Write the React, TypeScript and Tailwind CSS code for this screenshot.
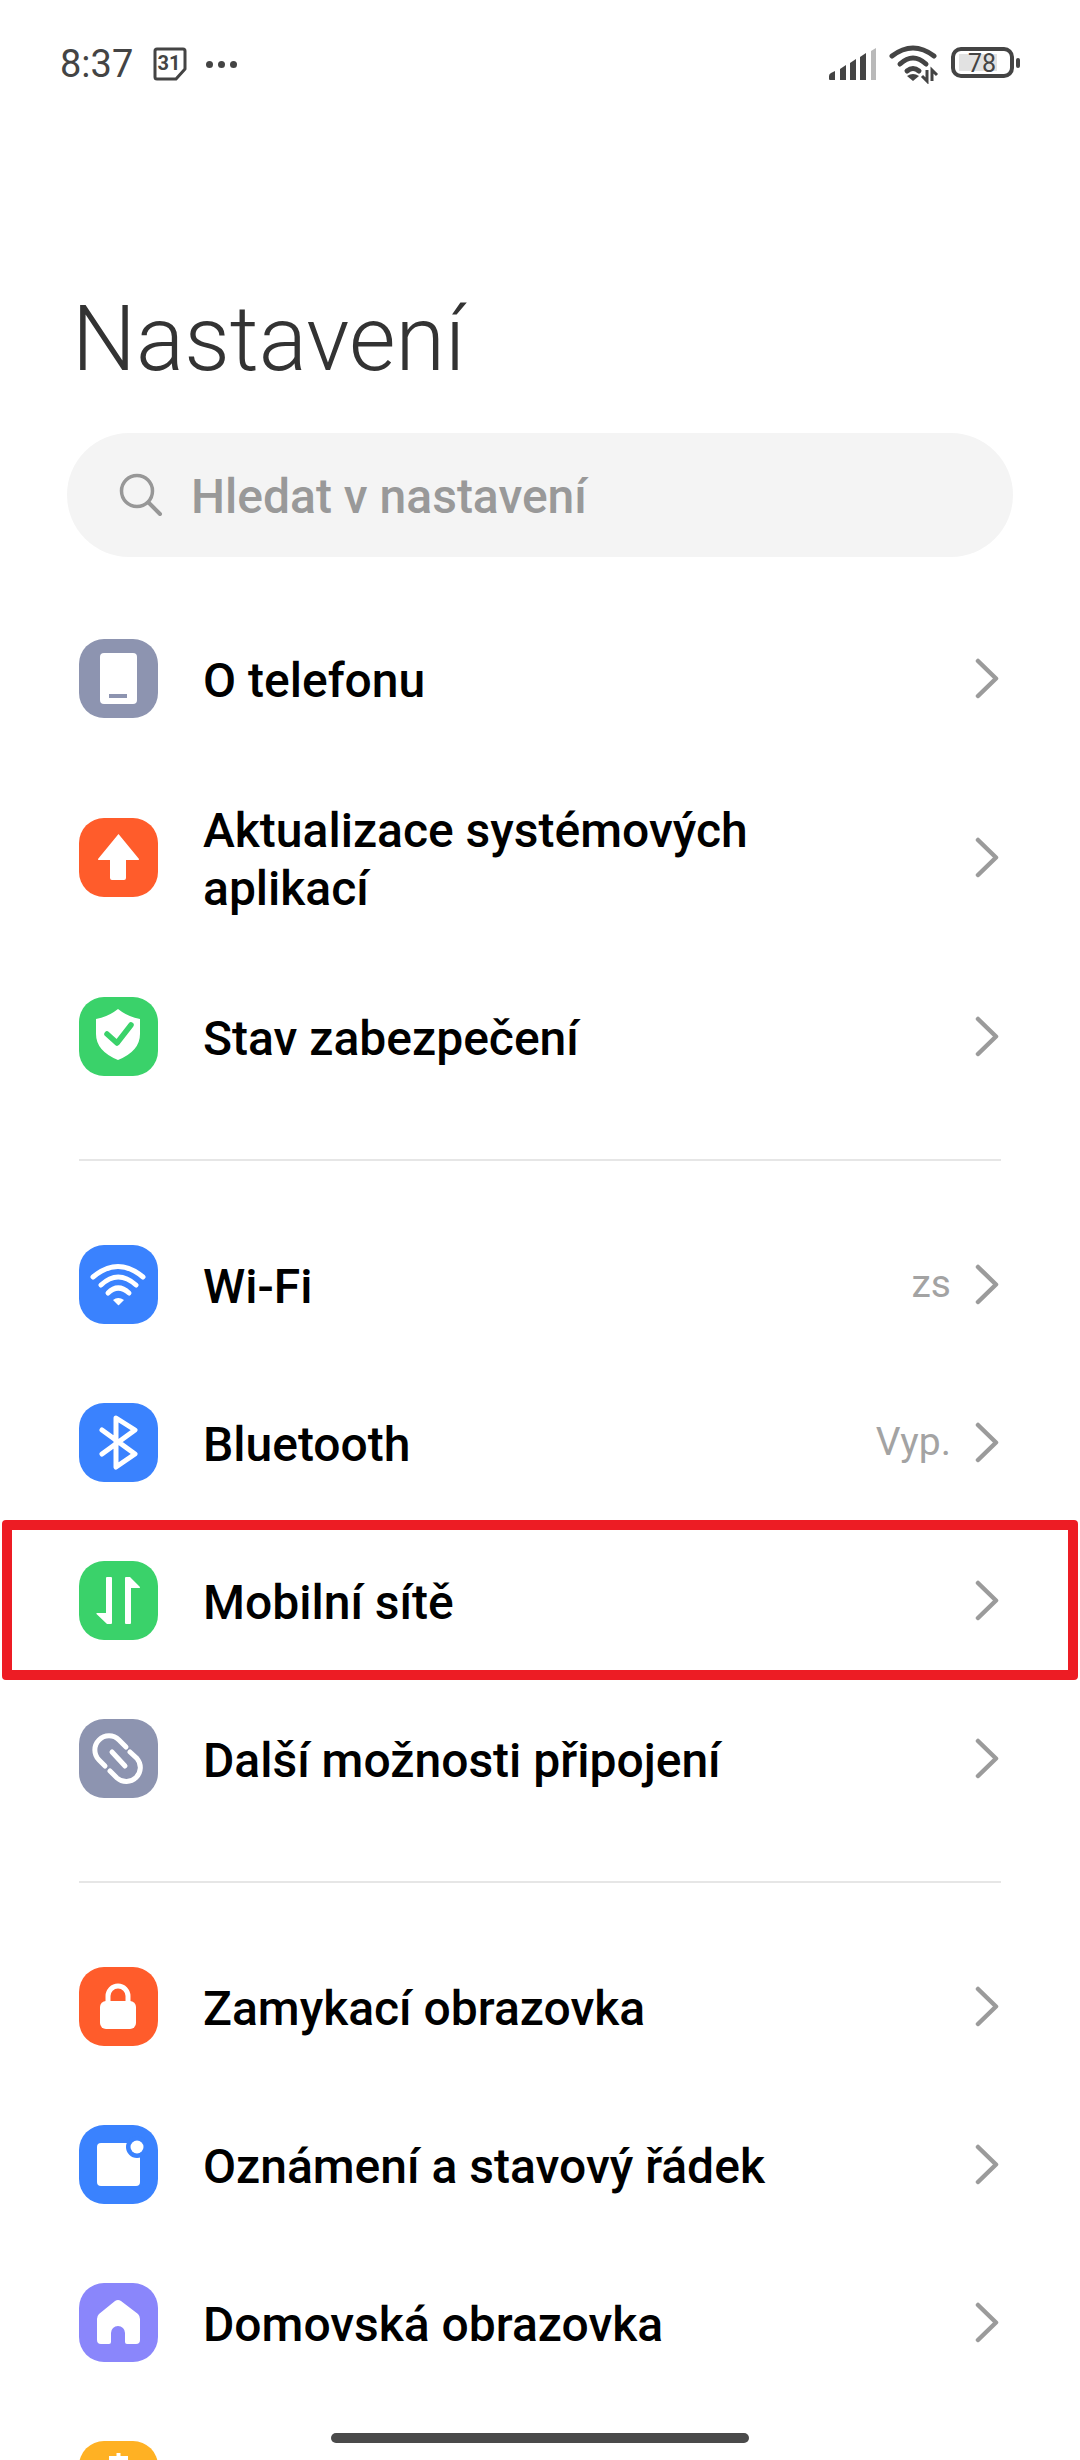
import React from "react";

function Chevron() {
  return (
    <svg width="25" height="41" viewBox="0 0 25 41" fill="none" className="shrink-0">
      <path d="M3 3 L21 20.5 L3 38" stroke="#9b9b9b" strokeWidth="4.5" strokeLinecap="round" strokeLinejoin="round" />
    </svg>
  );
}

function Tile({ color, children }: { color: string; children: React.ReactNode }) {
  return (
    <div className={`h-[79px] w-[79px] shrink-0 overflow-hidden rounded-[25px] ${color}`}>
      <svg width="79" height="79" viewBox="0 0 79 79" fill="none">
        {children}
      </svg>
    </div>
  );
}

const white = "#ffffff";

const PhoneIcon = (
  <Tile color="bg-[#8d94b0]">
    <rect x="21" y="14" width="37" height="51" rx="4" fill={white} />
    <rect x="30" y="55" width="18" height="4" fill="#8d94b0" />
  </Tile>
);

const UpdateIcon = (
  <Tile color="bg-[#ff5c2b]">
    <path d="M39.5 16 L60 41 Q60.5 42 59 42 H47 V60 Q47 62 45 62 H33 Q31 62 31 60 V42 H20 Q18.5 42 19 41 Z" fill={white} />
  </Tile>
);

const ShieldIcon = (
  <Tile color="bg-[#3ad26a]">
    <path d="M39 12 Q49 20 61 22 V37 Q61 54 39 63 Q17 54 17 37 V22 Q29 20 39 12 Z" fill={white} />
    <path d="M28 37 L38 46 L52 28" stroke="#3ad26a" strokeWidth="5.5" strokeLinecap="round" strokeLinejoin="round" />
  </Tile>
);

const WifiIcon = (
  <Tile color="bg-[#3a82fe]">
    <path d="M14 32 Q39 11 64 32" stroke={white} strokeWidth="5" strokeLinecap="round" />
    <path d="M22 40 Q39 24 57 40" stroke={white} strokeWidth="5" strokeLinecap="round" />
    <path d="M29 48 Q39 38 50 48" stroke={white} strokeWidth="5" strokeLinecap="round" />
    <path d="M34 55 Q39 51 45 55 L40 60 Q39.5 60.5 39 60 Z" fill={white} />
  </Tile>
);

const BluetoothIcon = (
  <Tile color="bg-[#3a82fe]">
    <path d="M23 27 L56 51 L37 64 V15 L56 27 L23 51" stroke={white} strokeWidth="5" strokeLinecap="round" strokeLinejoin="round" />
  </Tile>
);

const MobileIcon = (
  <Tile color="bg-[#3ad26a]">
    <path d="M27 17 Q27 16 28 16 H32 Q33 16 33 17 V62 Q33 63 32 63 H28 L17.5 53 Q17 52 18 52 H27 Z" fill={white} />
    <path d="M46 17 Q46 16 47 16 H51 L61 26 Q61.5 27 60 27 H52 V62 Q52 63 51 63 H47 Q46 63 46 62 Z" fill={white} />
  </Tile>
);

const LinkIcon = (
  <Tile color="bg-[#8d94b0]">
    <path d="M47 28 L40 21 A14 14 0 0 0 20 41 L26 47" stroke={white} strokeWidth="5" strokeLinecap="round" />
    <path d="M31 52 L38 59 A14 14 0 0 0 58 39.5 L51 33" stroke={white} strokeWidth="5" strokeLinecap="round" />
    <path d="M33 33 L46 47" stroke={white} strokeWidth="5" strokeLinecap="round" />
  </Tile>
);

const LockIcon = (
  <Tile color="bg-[#ff5c2b]">
    <path d="M29 36 V29 A10 10 0 0 1 49 29 V36" stroke={white} strokeWidth="5" />
    <rect x="21" y="34" width="36" height="28" rx="6" fill={white} />
  </Tile>
);

const NotificationIcon = (
  <Tile color="bg-[#3a82fe]">
    <rect x="18" y="18" width="43" height="43" rx="4" fill={white} />
    <circle cx="58" cy="22" r="11" fill="#3a82fe" />
    <circle cx="58" cy="22" r="6.5" fill={white} />
  </Tile>
);

const HomeIcon = (
  <Tile color="bg-[#8a86fb]">
    <path
      d="M36 18 L20 31 Q18 33 18 36 V57 Q18 61 22 61 H30 Q32 61 32 59 V50 A7 7 0 0 1 46 50 V59 Q46 61 48 61 H57 Q61 61 61 57 V36 Q61 33 59 31 L42 18 Q39 16 36 18 Z"
      fill={white}
    />
  </Tile>
);

const WallpaperIcon = (
  <Tile color="bg-[#ffb123]">
    <path d="M39.5 12 V30 M30 17 H49" stroke={white} strokeWidth="4" />
  </Tile>
);

function Row({
  icon,
  label,
  value,
  tall,
  marked,
}: {
  icon: React.ReactNode;
  label: React.ReactNode;
  value?: string;
  tall?: boolean;
  marked?: boolean;
}) {
  return (
    <div className={`relative flex items-center pl-[79px] pr-[80px] ${tall ? "h-[200px]" : "h-[158px]"}`}>
      {icon}
      <div className="ml-[45px] flex-1 pt-[5px] text-[48px] leading-[58px] font-medium text-black">{label}</div>
      {value && <span className="mr-[24px] text-[39px] text-[#a3a3a3]">{value}</span>}
      <Chevron />
      {marked && (
        <div className="absolute -top-px -bottom-px left-[2px] right-[2px] rounded-[4px] border-[10px] border-[#ed1c24]" />
      )}
    </div>
  );
}

function Divider() {
  return <div className="mx-[79px] my-[44px] h-[2px] bg-[#e6e6e6]" />;
}

function StatusBar() {
  return (
    <div className="flex h-[128px] items-center justify-between pl-[60px] pr-[60px] text-[#444444]">
      <div className="flex items-center">
        <span className="text-[38px] leading-none">8:37</span>
        <svg width="34" height="34" viewBox="0 0 34 34" fill="none" className="ml-[20px]">
          <path d="M4 2 H30 Q32 2 32 4 V22 L23 32 H4 Q2 32 2 30 V4 Q2 2 4 2 Z" stroke="#444444" strokeWidth="3" strokeLinejoin="round" />
          <text x="16" y="23" textAnchor="middle" fontSize="20" fontWeight="700" fill="#444444" fontFamily="Roboto, sans-serif">
            31
          </text>
        </svg>
        <div className="ml-[19px] flex gap-[5px]">
          <div className="h-[7px] w-[7px] rounded-full bg-[#444444]" />
          <div className="h-[7px] w-[7px] rounded-full bg-[#444444]" />
          <div className="h-[7px] w-[7px] rounded-full bg-[#444444]" />
        </div>
      </div>
      <svg width="194" height="40" viewBox="0 0 194 40" fill="none" className="mr-[-3px]">
        {/* signal */}
        <path d="M0 32 Q0 30 2 29 L6 27 V36 H1 Q0 36 0 35 Z" fill="#444444" />
        <path d="M11 25 L17 21 V36 H11 Z" fill="#444444" />
        <path d="M21 19 L27 15 V36 H21 Z" fill="#444444" />
        <path d="M31 13 L37 9 V36 H31 Z" fill="#444444" />
        <path d="M42 7 L47 4 V36 H42 Z" fill="#b9b9b9" />
        {/* wifi */}
        <path d="M63 12 Q84 -4 105 12" stroke="#444444" strokeWidth="5" strokeLinecap="round" />
        <path d="M71 20 Q84 8 97 20" stroke="#444444" strokeWidth="5" strokeLinecap="round" />
        <path d="M78 27 Q84 22 90 27" stroke="#444444" strokeWidth="5" strokeLinecap="round" />
        <path d="M78 32 Q84 28 90 32 L84 37 Z" fill="#444444" />
        <path d="M98 26 V37 L93 32 M103 37 V26 L108 31" stroke="#444444" strokeWidth="3" />
        {/* battery */}
        <rect x="124" y="5" width="59" height="27" rx="8" stroke="#444444" strokeWidth="4" />
        <rect x="130" y="10" width="38" height="17" fill="#e2e2e2" />
        <text x="153" y="28" textAnchor="middle" fontSize="25" fill="#444444" fontFamily="Roboto, sans-serif">
          78
        </text>
        <rect x="187" y="14" width="4" height="10" rx="2" fill="#444444" />
      </svg>
    </div>
  );
}

export default function App() {
  return (
    <div className="relative h-[2460px] w-[1080px] overflow-hidden bg-white font-[Roboto,sans-serif]">
      <StatusBar />
      <h1 className="mt-[160px] pl-[72px] text-[90px] leading-[104px] font-light text-[#333333]">Nastavení</h1>
      <div className="mx-[67px] mt-[41px] flex h-[124px] items-center rounded-full bg-[#f4f4f4] pl-[52px]">
        <svg width="44" height="44" viewBox="0 0 44 44" fill="none">
          <circle cx="18" cy="18" r="15.5" stroke="#979797" strokeWidth="3.5" />
          <path d="M29.5 29.5 L41 41" stroke="#979797" strokeWidth="4" strokeLinecap="round" />
        </svg>
        <span className="ml-[28px] pt-[3px] text-[48px] font-medium text-[#999999]">Hledat v nastavení</span>
      </div>
      <div className="mt-[42px]">
        <Row icon={PhoneIcon} label="O telefonu" />
        <Row icon={UpdateIcon} tall label={<>Aktualizace systémových<br />aplikací</>} />
        <Row icon={ShieldIcon} label="Stav zabezpečení" />
        <Divider />
        <Row icon={WifiIcon} label="Wi-Fi" value="zs" />
        <Row icon={BluetoothIcon} label="Bluetooth" value="Vyp." />
        <Row icon={MobileIcon} label="Mobilní sítě" marked />
        <Row icon={LinkIcon} label="Další možnosti připojení" />
        <Divider />
        <Row icon={LockIcon} label="Zamykací obrazovka" />
        <Row icon={NotificationIcon} label="Oznámení a stavový řádek" />
        <Row icon={HomeIcon} label="Domovská obrazovka" />
        <Row icon={WallpaperIcon} label="" />
      </div>
      <div className="absolute bottom-[17px] left-[331px] h-[10px] w-[418px] rounded-full bg-[#4a4a4a]" />
    </div>
  );
}
